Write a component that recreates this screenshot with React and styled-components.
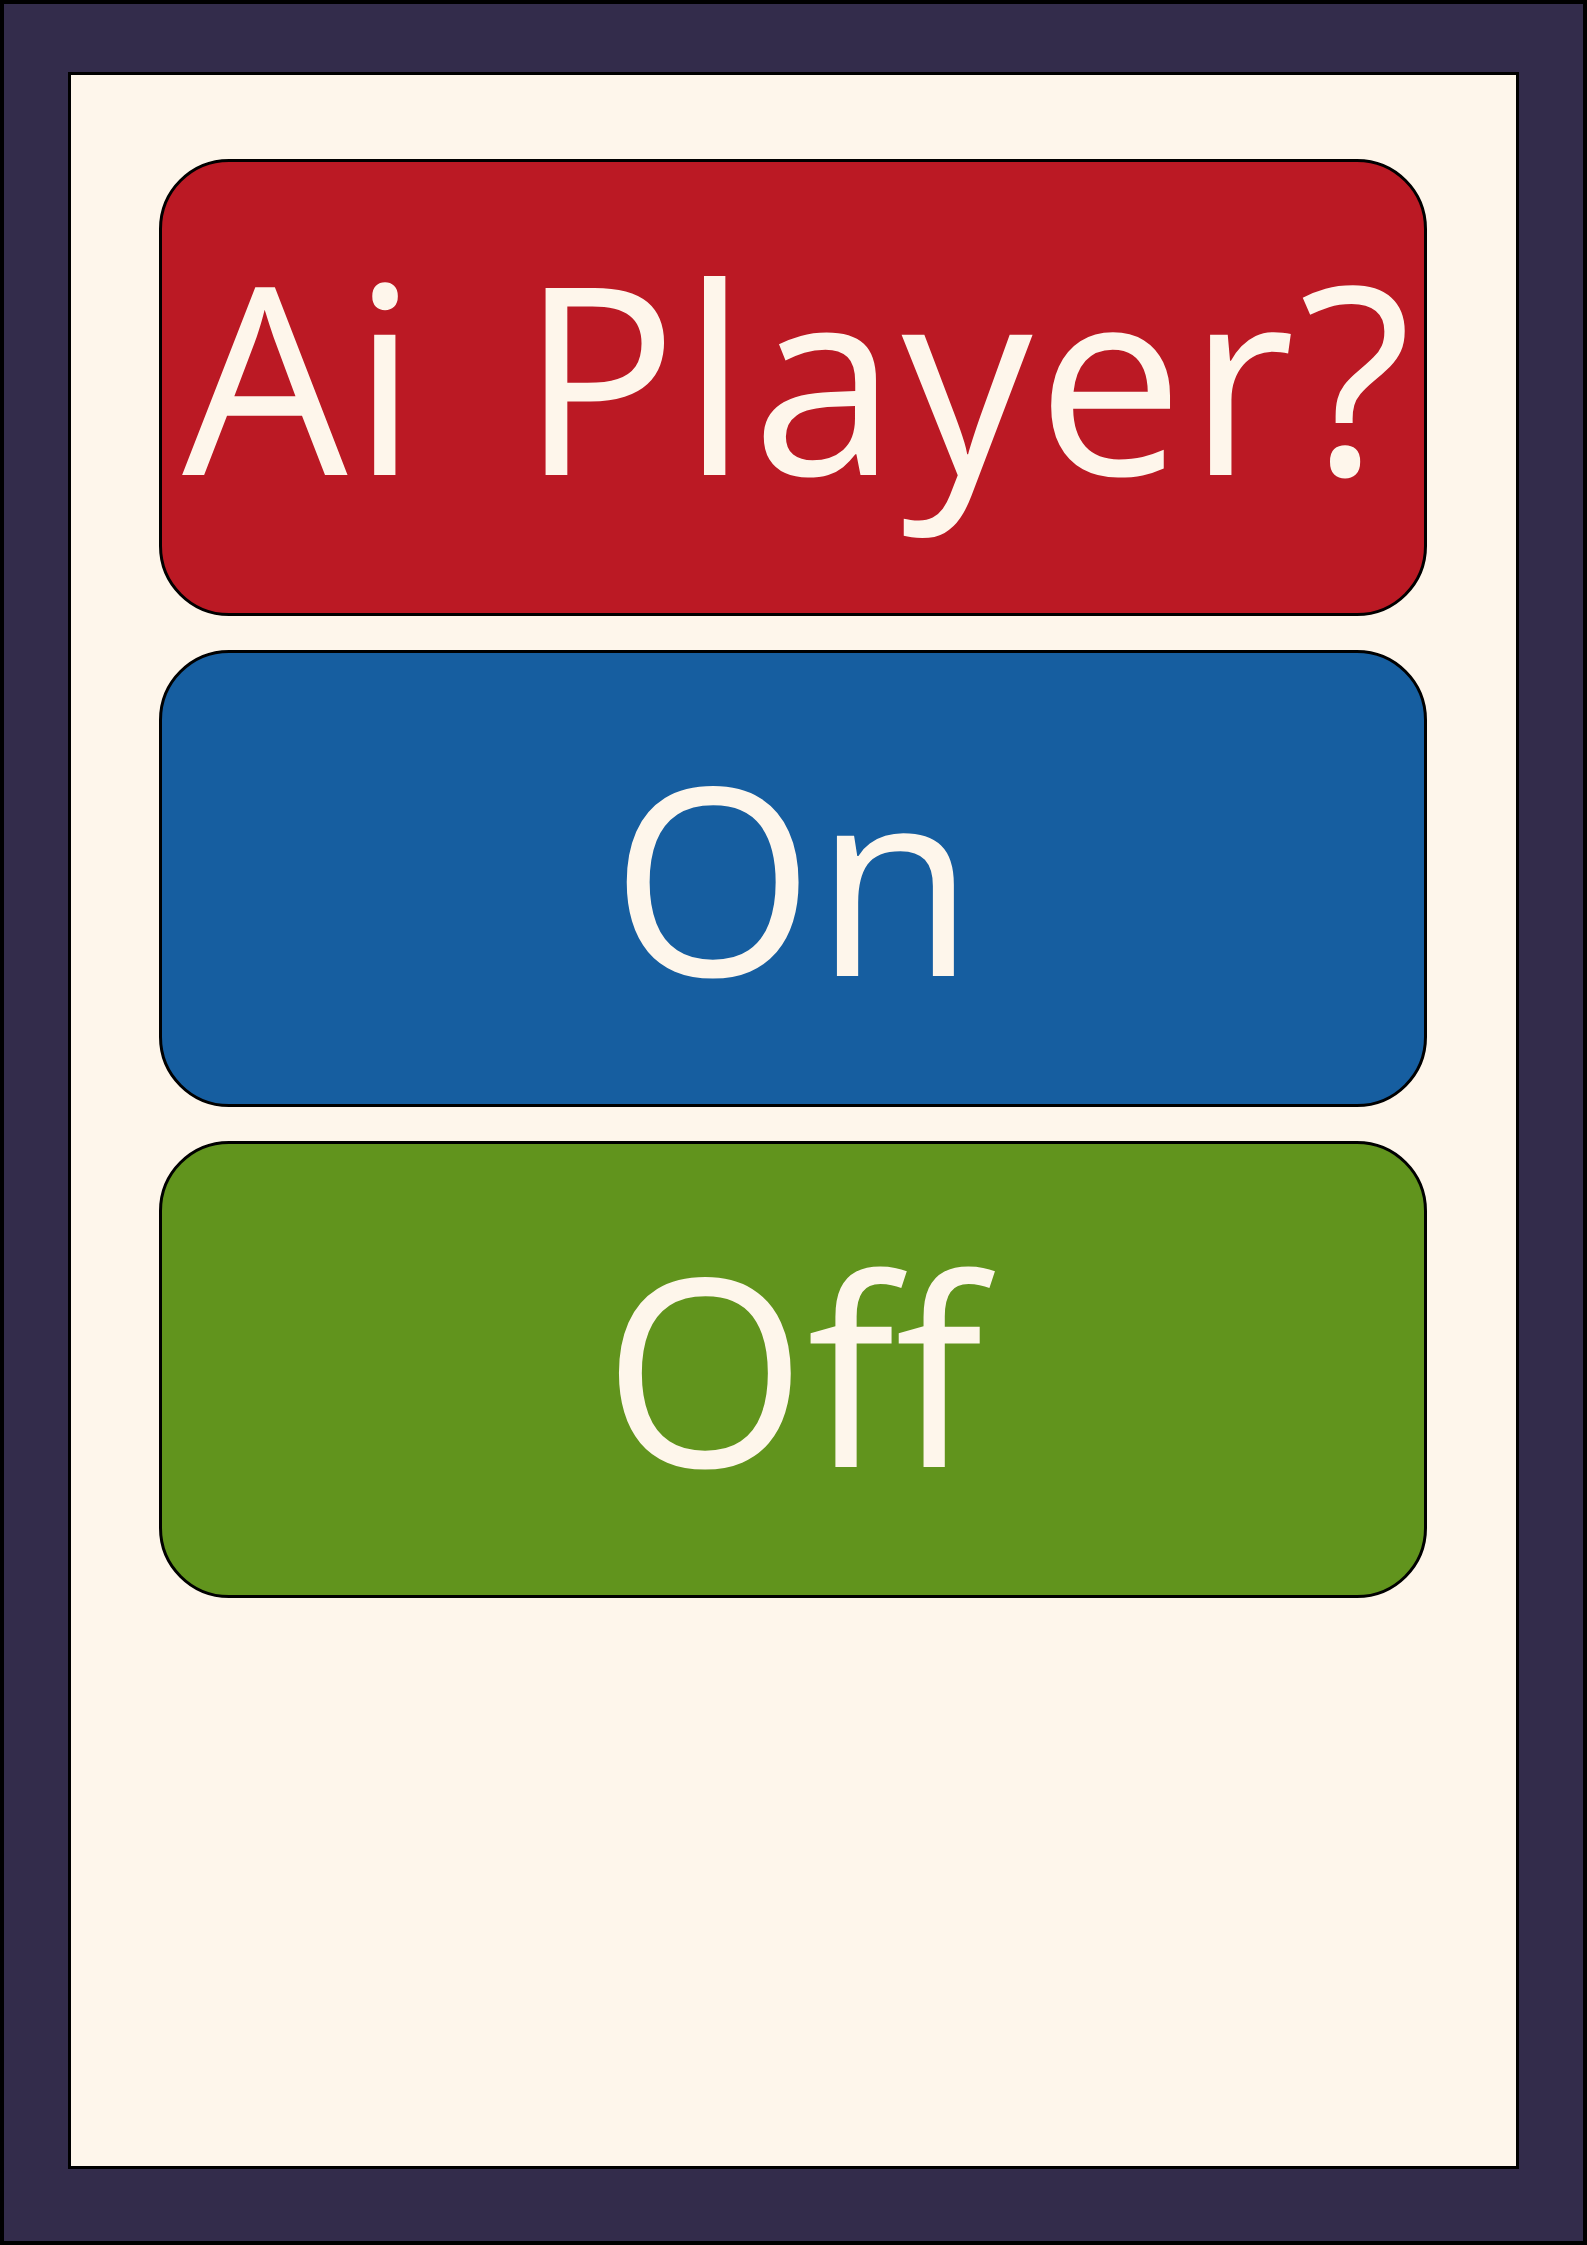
import React from 'react';
import styled, { createGlobalStyle } from 'styled-components';

const GlobalStyle = createGlobalStyle`
  html, body {
    margin: 0;
    padding: 0;
    background: #332c4b;
  }
  * {
    box-sizing: border-box;
  }
`;

const Frame = styled.div`
  width: 1587px;
  height: 2245px;
  background-color: #332c4b;
  border: 4px solid #000;
  padding: 68px 64px 72px 64px;
  display: flex;
`;

const Panel = styled.div`
  flex: 1;
  min-width: 0;
  background-color: #fef6eb;
  border: 3px solid #000;
  padding: 84px 89px 0 88px;
  display: flex;
  flex-direction: column;
  gap: 34px;
`;

const Choice = styled.button`
  height: 457px;
  width: 100%;
  min-width: 0;
  border: 3px solid #000;
  border-radius: 70px;
  background-color: ${props => props.bg};
  color: #fef6eb;
  font-family: "Open Sans", "Noto Sans", sans-serif;
  font-size: 262px;
  line-height: 1;
  letter-spacing: ${props => props.spread || 0}px;
  word-spacing: ${props => props.spread ? 26 : 0}px;
  display: flex;
  align-items: center;
  justify-content: center;
  padding: 0 0 ${props => props.lift || 7}px ${props => props.shift || 0}px;
  cursor: pointer;
  white-space: nowrap;
  overflow: hidden;
`;

const App = () => {
  return (
    <>
      <GlobalStyle />
      <Frame>
        <Panel>
          <Choice bg="#bb1924" spread={4} lift={28} shift={12}>Ai Player?</Choice>
          <Choice bg="#165ea0">On</Choice>
          <Choice bg="#61941d">Off</Choice>
        </Panel>
      </Frame>
    </>
  );
};

export default App;
